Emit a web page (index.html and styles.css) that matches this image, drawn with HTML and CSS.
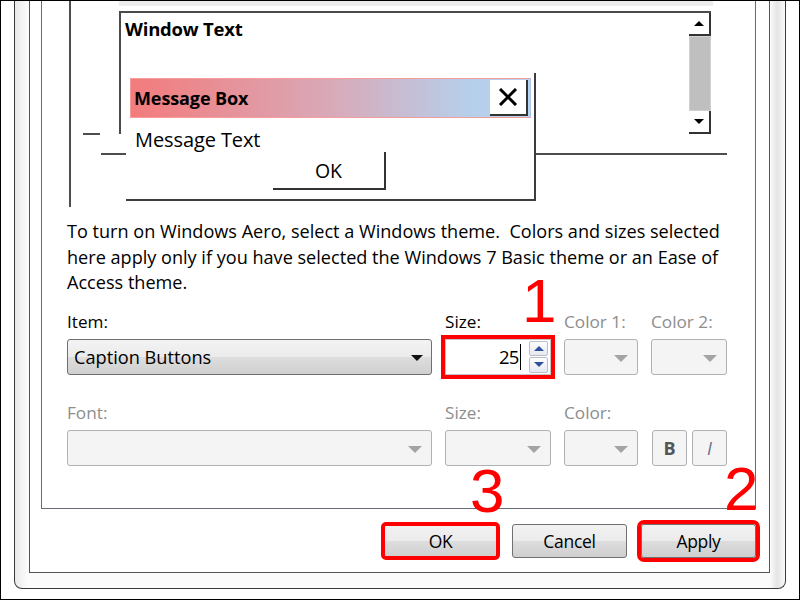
FILE: index.html
```html
<!DOCTYPE html>
<html>
<head>
<meta charset="utf-8">
<link rel="stylesheet" href="styles.css">
</head>
<body>
<div class="screen">
  <div class="window">
    <div class="client">
      <div class="panel">
        <div class="preview">
          <div class="strip"></div>
          <div class="vline"></div>
          <div class="tick t1"></div>
          <div class="tick t2"></div>
          <div class="tick t3"></div>
          <div class="wtext">
            <div class="wtext-label">Window Text</div>
            <div class="sbar">
              <div class="sbtn"><span class="tri-up"></span></div>
              <div class="sthumb"></div>
              <div class="sbtn"><span class="tri-down"></span></div>
            </div>
          </div>
          <div class="msgbox">
            <div class="caption">
              <span class="cap-title">Message Box</span>
              <span class="cap-close">
                <svg width="20" height="18" viewBox="0 0 20 18"><path d="M2 1 L18 17 M18 1 L2 17" stroke="#000" stroke-width="3" fill="none"/></svg>
              </span>
            </div>
            <div class="mb-text">Message Text</div>
            <div class="mb-ok">OK</div>
          </div>
        </div>
        <p class="note">To turn on Windows Aero, select a Windows theme.&nbsp; Colors and sizes selected<br>here apply only if you have selected the Windows 7 Basic theme or an Ease of<br>Access theme.</p>
        <div class="form">
          <div class="lbl">Item:</div>
          <div class="lbl">Size:</div>
          <div class="lbl off">Color 1:</div>
          <div class="lbl off">Color 2:</div>

          <div class="combo"><span class="combo-text">Caption Buttons</span><span class="arrow-dark"></span></div>
          <div class="spin">
            <div class="spin-field"><span class="spin-val">25</span><span class="caret"></span></div>
            <div class="spin-btns">
              <div class="spin-btn"><span class="blue-up"></span></div>
              <div class="spin-btn"><span class="blue-down"></span></div>
            </div>
          </div>
          <div class="combo dis"><span class="arrow-gray"></span></div>
          <div class="combo dis"><span class="arrow-gray"></span></div>

          <div class="lbl off">Font:</div>
          <div class="lbl off">Size:</div>
          <div class="lbl off">Color:</div>
          <div class="lbl"></div>

          <div class="combo dis"><span class="arrow-gray"></span></div>
          <div class="combo dis"><span class="arrow-gray"></span></div>
          <div class="combo dis"><span class="arrow-gray"></span></div>
          <div class="styles">
            <div class="sty bold">B</div>
            <div class="sty ital">I</div>
          </div>
        </div>
      </div>
      <div class="actions">
        <div class="btn mark-ok">OK</div>
        <div class="btn">Cancel</div>
        <div class="btn mark-apply">Apply</div>
      </div>
    </div>
  </div>
  <div class="num n1">1</div>
  <div class="num n2">2</div>
  <div class="num n3">3</div>
</div>
</body>
</html>
```

FILE: styles.css
```css
* { box-sizing: border-box; }
html, body { margin: 0; padding: 0; background: #fff; }
body { font-family: "Open Sans", "Noto Sans", sans-serif; color: #000; }

.screen {
  position: relative;
  width: 800px;
  height: 600px;
  border: 1px solid #000;
  background: #fff;
  overflow: hidden;
}

.window {
  margin-left: 13px;
  width: 772px;
  height: 588px;
  border: 1px solid #3a3a3a;
  border-top: none;
  border-radius: 0 0 8px 8px;
  background: linear-gradient(to right, #e9e9e9 0px, #fbfbfb 12px, #fbfbfb 755px, #e4e4e4 762px, #fafafa 770px);
  padding: 0 15px 15px 14px;
}

.client {
  height: 572px;
  width: 741px;
  background: #fff;
  border: 1px solid #555;
  border-top: none;
  padding: 0 13px 0 11px;
}

.panel {
  height: 508px;
  border: 1px solid #676b75;
  border-top: none;
}

.preview {
  position: relative;
  height: 207px;
}

.strip {
  position: absolute;
  left: 77px; top: 0;
  width: 594px; height: 5px;
  background: #ededed;
}
.vline {
  position: absolute;
  left: 27px; top: 0;
  width: 2px; height: 206px;
  background: #4d4d4d;
}
.tick { position: absolute; height: 2px; background: #4d4d4d; }
.t1 { left: 41px; top: 132px; width: 17px; }
.t2 { left: 59px; top: 152px; width: 25px; }
.t3 { left: 492px; top: 152px; width: 193px; }

.wtext {
  position: absolute;
  left: 77px; top: 10px;
  width: 592px; height: 123px;
  border-top: 2px solid #4a4a4a;
  border-left: 2px solid #4a4a4a;
  background: #fff;
}
.wtext-label {
  font-weight: 700;
  font-size: 18.5px;
  line-height: 22px;
  padding: 5px 0 0 4px;
  letter-spacing: -0.2px;
}
.sbar {
  position: absolute;
  right: 0; top: 0; bottom: 0;
  width: 22px;
  display: flex;
  flex-direction: column;
}
.sbtn {
  height: 23px;
  background: #fff;
  border-right: 2px solid #333;
  border-bottom: 2px solid #333;
  display: flex;
  align-items: center;
  justify-content: center;
}
.sthumb {
  flex: 1;
  background: #bfbfbf;
  border: 1px solid #d0d0d0;
}
.tri-up, .tri-down { width: 0; height: 0; border-left: 5px solid transparent; border-right: 5px solid transparent; }
.tri-up { border-bottom: 5px solid #000; }
.tri-down { border-top: 5px solid #000; }

.msgbox {
  position: absolute;
  left: 84px; top: 72px;
  width: 410px; height: 128px;
  background: #fff;
  border-right: 2px solid #3c3c3c;
  border-bottom: 2px solid #3c3c3c;
  padding: 5px 3px 0 4px;
}
.caption {
  height: 40px;
  display: flex;
  align-items: center;
  justify-content: space-between;
  background: linear-gradient(to right, #f37b7c, #d9a9b8 50%, #b6cfeb 85%, #b9d2ee);
  border: 1px solid #f59c9c;
  border-right-color: #a6c6ec;
  padding: 0 2px 0 3px;
}
.cap-title {
  font-weight: 700;
  font-size: 18px;
  letter-spacing: -0.1px;
}
.cap-close {
  width: 38px; height: 36px;
  background: #fff;
  border-right: 2px solid #333;
  border-bottom: 2px solid #333;
  display: flex;
  align-items: center;
  justify-content: center;
}
.mb-text {
  margin-top: 10px;
  padding-left: 5px;
  font-size: 20px;
  line-height: 24px;
  letter-spacing: -0.1px;
}
.mb-ok {
  margin: 0 auto;
  width: 113px; height: 38px;
  border-right: 2px solid #333;
  border-bottom: 2px solid #333;
  text-align: center;
  font-size: 19.5px;
  line-height: 38px;
  position: relative;
  left: -1px;
}

.note {
  margin: 11px 0 0 0;
  padding-left: 25px;
  font-size: 18.1px;
  line-height: 25.5px;
  white-space: nowrap;
}

.form {
  margin: 13px 0 0 25px;
  display: grid;
  grid-template-columns: 365px 106px 74px 76px;
  grid-template-rows: 26px 36px 47px 36px;
  column-gap: 13px;
  row-gap: 4px;
}
.lbl {
  align-self: end;
  font-size: 17.2px;
  line-height: 26px;
}
.off { color: #8d8d8d; }

.combo {
  position: relative;
  border: 1px solid #6f6f6f;
  border-radius: 3px;
  background: linear-gradient(to bottom, #f3f3f3 0%, #ebebeb 50%, #dddddd 51%, #d0d0d0 100%);
  display: flex;
  align-items: center;
  padding-left: 6px;
}
.combo-text { font-size: 18.2px; }
.combo.dis {
  border-color: #aeb1b5;
  background: #f4f4f4;
}
.arrow-dark, .arrow-gray {
  position: absolute;
  top: 50%;
  width: 0; height: 0;
}
.arrow-dark {
  right: 8px;
  margin-top: -2px;
  border-left: 6px solid transparent;
  border-right: 6px solid transparent;
  border-top: 6px solid #111;
}
.arrow-gray {
  right: 9px;
  margin-top: -2px;
  border-left: 7px solid transparent;
  border-right: 7px solid transparent;
  border-top: 7px solid #a4a4a4;
}

.spin {
  display: flex;
  outline: 4px solid #f00;
  border: 1px solid #c5c5c5;
  background: #fff;
  padding: 1px 2px 1px 1px;
}
.spin-field {
  flex: 1;
  display: flex;
  align-items: center;
  justify-content: flex-end;
  padding-right: 8px;
}
.spin-val { font-size: 18.5px; letter-spacing: -0.8px; }
.caret {
  width: 1.5px; height: 26px;
  background: #000;
  margin-left: 1px;
}
.spin-btns {
  width: 19px;
  display: flex;
  flex-direction: column;
  gap: 1px;
}
.spin-btn {
  flex: 1;
  border: 1px solid #b9bec8;
  border-radius: 2px;
  background: linear-gradient(to bottom, #fdfdfd, #e6e9ef);
  display: flex;
  align-items: center;
  justify-content: center;
}
.blue-up, .blue-down { width: 0; height: 0; border-left: 5px solid transparent; border-right: 5px solid transparent; }
.blue-up { border-bottom: 5px solid #2f4f9f; }
.blue-down { border-top: 5px solid #2f4f9f; }

.styles {
  display: flex;
  gap: 5px;
  padding-left: 1px;
}
.sty {
  width: 35px;
  border: 1px solid #aeb1b5;
  border-radius: 3px;
  background: #f4f4f4;
  text-align: center;
  line-height: 34px;
  font-size: 18px;
  color: #555;
}
.bold { font-weight: 700; }
.ital { font-style: italic; color: #6a7090; }

.actions {
  margin-top: 15px;
  display: flex;
  justify-content: flex-end;
  gap: 14px;
}
.btn {
  width: 115px; height: 34px;
  border: 1px solid #707070;
  border-radius: 3px;
  background: linear-gradient(to bottom, #f2f2f2 0%, #ebebeb 50%, #dddddd 51%, #cfcfcf 100%);
  text-align: center;
  font-size: 17.5px;
  line-height: 32px;
  letter-spacing: -0.3px;
}
.mark-ok { outline: 4px solid #f00; outline-offset: -2px; }
.mark-apply { outline: 4px solid #f00; outline-offset: 0; }

.num {
  position: absolute;
  font-family: "Liberation Sans", Arial, sans-serif;
  font-size: 62px;
  line-height: 62px;
  color: #f00;
}
.n1 { left: 521px; top: 269px; }
.n2 { left: 723px; top: 457px; }
.n3 { left: 469px; top: 459px; }
```
